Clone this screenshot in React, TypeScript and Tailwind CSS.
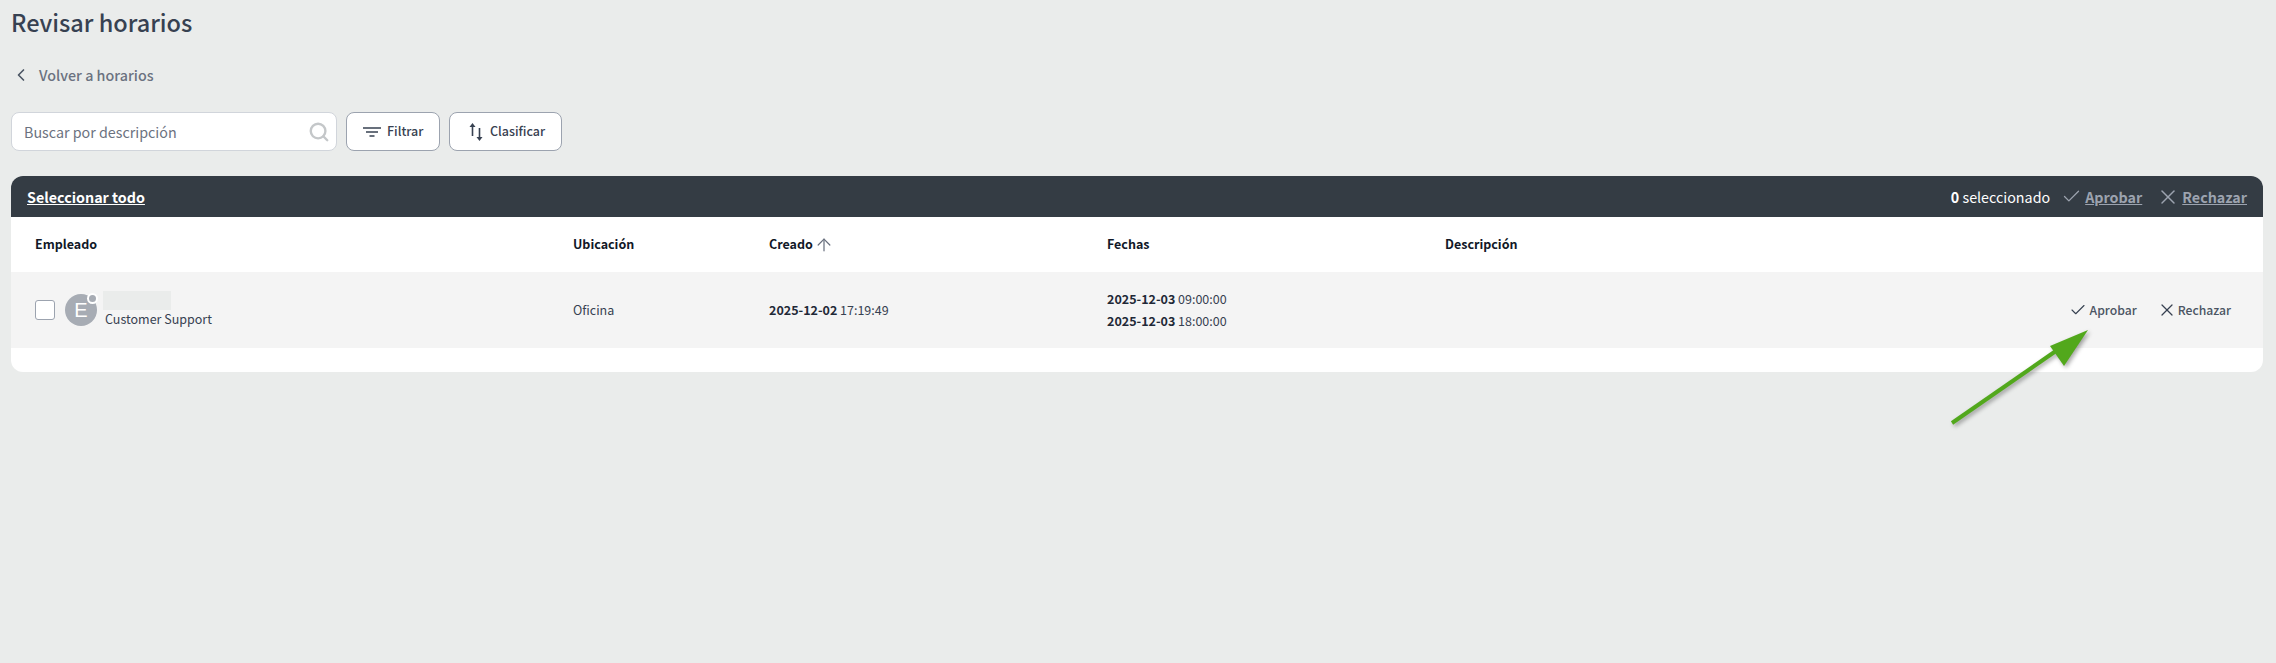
import { ArrowUp, Check, ChevronLeft, Search, X } from "lucide-react";

const gridCols = "grid grid-cols-[538px_196px_338px_338px_1fr] pl-6";

function FilterIcon() {
  return (
    <svg width="18" height="10" viewBox="0 0 18 10" className="text-[#374151]">
      <path d="M0 1h18M3 5h12M6.5 9h5" stroke="currentColor" strokeWidth="1.6" fill="none" />
    </svg>
  );
}

function SortIcon() {
  return (
    <svg width="14" height="18" viewBox="0 0 14 18" className="text-[#374151]">
      <path d="M3.5 13V3" stroke="currentColor" strokeWidth="1.6" fill="none" />
      <path d="M3.5 0L0.5 4h6z" fill="currentColor" />
      <path d="M10.5 5v10" stroke="currentColor" strokeWidth="1.6" fill="none" />
      <path d="M10.5 18L7.5 14h6z" fill="currentColor" />
    </svg>
  );
}

function DateTime({ date, time }: { date: string; time: string }) {
  return (
    <p className="text-[12.5px] leading-[22px] text-[#374151]">
      <span className="font-bold text-[#1f2937]">{date}</span> {time}
    </p>
  );
}

function GreenArrow() {
  return (
    <svg
      width="160"
      height="110"
      viewBox="0 0 160 110"
      className="absolute left-[1940px] top-[322px] drop-shadow-[2px_2px_2px_rgba(0,0,0,0.35)]"
    >
      <path d="M12 101L126 22" stroke="#52a81c" strokeWidth="4" fill="none" />
      <path d="M148 8L110 24L124 44z" fill="#52a81c" />
    </svg>
  );
}

export default function App() {
  return (
    <main className="relative min-h-screen bg-[#eaeceb] pr-[13px] pl-[11px] font-['Noto_Sans_CJK_JP','Noto_Sans',sans-serif] text-[#374151]">
      <h1 className="pt-[4px] text-[23.5px] leading-9 font-medium text-[#374151]">Revisar horarios</h1>

      <a className="mt-[23px] flex h-[24px] items-center gap-[8px] text-[14.3px] font-medium text-[#6b7280]">
        <ChevronLeft size={20} strokeWidth={2} className="text-[#4b5563]" />
        Volver a horarios
      </a>

      <div className="mt-[25px] flex gap-[9px]">
        <div className="flex h-[39px] w-[326px] items-center justify-between rounded-lg border border-[#d1d5db] bg-white pr-[6px] pl-[12px]">
          <span className="text-[14.3px] text-[#6b7280]">Buscar por descripción</span>
          <Search size={22} strokeWidth={2.6} className="text-[#c4c7c9]" />
        </div>
        <button
          type="button"
          className="flex h-[39px] w-[94px] items-center gap-[6px] rounded-lg border border-[#9ca3af] bg-white pl-[16px] text-[12.5px] font-medium"
        >
          <FilterIcon />
          Filtrar
        </button>
        <button
          type="button"
          className="flex h-[39px] w-[113px] items-center gap-[7px] rounded-lg border border-[#9ca3af] bg-white pl-[19px] text-[12.5px] font-medium"
        >
          <SortIcon />
          Clasificar
        </button>
      </div>

      <section className="mt-[25px] overflow-hidden rounded-xl bg-white pb-[24px]">
        <div className="flex h-[41px] items-center justify-between bg-[#343c44] pr-4 pl-4 text-[14.3px] text-white">
          <a className="font-bold underline">Seleccionar todo</a>
          <div className="flex items-center">
            <span>
              <b>0</b> seleccionado
            </span>
            <span className="ml-[11px] flex items-center gap-[3px] font-bold text-[#9ca3af]">
              <Check size={21} strokeWidth={1.5} />
              <span className="underline">Aprobar</span>
            </span>
            <span className="ml-[14px] flex items-center gap-[2px] font-bold text-[#9ca3af]">
              <X size={24} strokeWidth={1.5} />
              <span className="underline">Rechazar</span>
            </span>
          </div>
        </div>

        <div className={`${gridCols} h-[55px] items-center text-[12.5px] font-bold text-[#111827]`}>
          <span>Empleado</span>
          <span>Ubicación</span>
          <span className="flex items-center">
            Creado <ArrowUp size={20} strokeWidth={1.5} className="ml-[1px] text-[#6b7280]" />
          </span>
          <span>Fechas</span>
          <span>Descripción</span>
        </div>

        <div className={`${gridCols} h-[76px] items-center bg-[#f4f4f4] text-[12.5px]`}>
          <div className="flex items-center">
            <span className="h-[20px] w-[20px] rounded-[3px] border border-[#9ca3af] bg-white" />
            <div className="relative ml-[10px] flex h-[32px] w-[32px] items-center justify-center rounded-full bg-[#a7acb4] font-['Liberation_Sans',sans-serif] text-[20px] text-white">
              E
              <span className="absolute top-[-1px] right-[-1px] h-[11px] w-[11px] rounded-full border-2 border-white bg-[#a7acb4]" />
            </div>
            <div className="mb-[1px] ml-[6px]">
              <div className="h-[19px] w-[68px] bg-[#eaeceb]" />
              <p className="ml-[2px] leading-[18px] text-[#374151]">Customer Support</p>
            </div>
          </div>
          <span>Oficina</span>
          <DateTime date="2025-12-02" time="17:19:49" />
          <div>
            <DateTime date="2025-12-03" time="09:00:00" />
            <DateTime date="2025-12-03" time="18:00:00" />
          </div>
          <div className="flex items-center justify-end pr-[32px] text-[12.2px] font-medium text-[#4b5563]">
            <span className="flex items-center gap-[3px]">
              <Check size={18} strokeWidth={1.5} className="text-[#374151]" />
              Aprobar
            </span>
            <span className="ml-[20px] flex items-center gap-[1px]">
              <X size={20} strokeWidth={1.5} className="text-[#374151]" />
              Rechazar
            </span>
          </div>
        </div>
      </section>

      <GreenArrow />
    </main>
  );
}
